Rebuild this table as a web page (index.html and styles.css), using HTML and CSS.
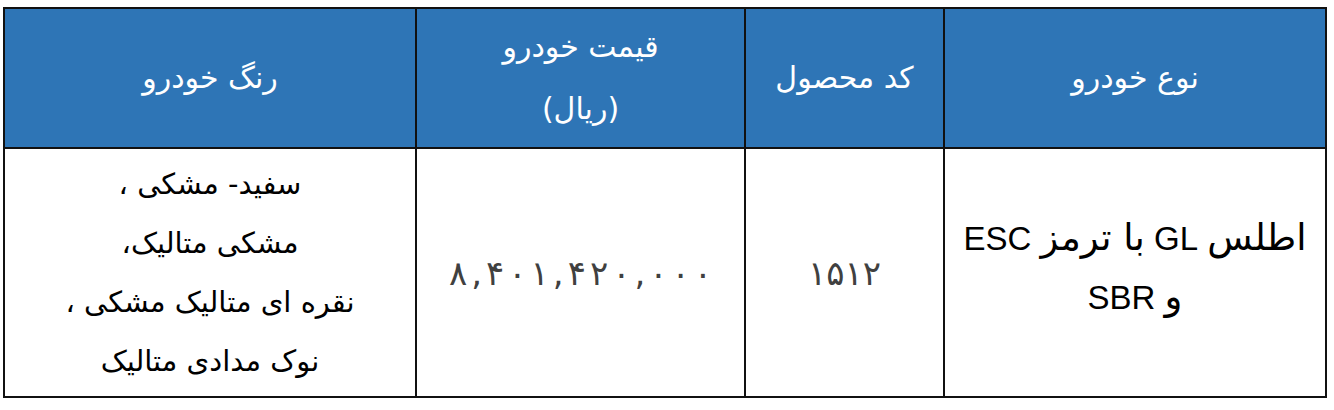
FILE: index.html
```html
<!DOCTYPE html>
<html lang="fa" dir="rtl">
<head>
<meta charset="utf-8">
<title>قیمت خودرو</title>
<link rel="stylesheet" href="styles.css">
</head>
<body>
<div class="page">
  <table class="price-table">
    <colgroup>
      <col class="c-type">
      <col class="c-code">
      <col class="c-price">
      <col class="c-color">
    </colgroup>
    <thead>
      <tr class="head-row">
        <th>نوع خودرو</th>
        <th>کد محصول</th>
        <th>قیمت خودرو<br>(ریال)</th>
        <th>رنگ خودرو</th>
      </tr>
    </thead>
    <tbody>
      <tr class="body-row">
        <td class="type-cell"><span class="fa">اطلس</span> GL <span class="fa">با ترمز</span> ESC<br><span class="fa">و</span> SBR</td>
        <td class="num-cell">۱۵۱۲</td>
        <td class="num-cell"><span class="price"><span>۸</span><span>,</span><span>۴</span><span>۰</span><span>۱</span><span>,</span><span>۴</span><span>۲</span><span>۰</span><span>,</span><span>۰</span><span>۰</span><span>۰</span></span></td>
        <td class="color-cell">سفید- مشکی ،<br>مشکی متالیک،<br>نقره ای متالیک مشکی ،<br>نوک مدادی متالیک</td>
      </tr>
    </tbody>
  </table>
</div>
</body>
</html>
```
FILE: styles.css
```css
html, body {
  margin: 0;
  padding: 0;
  background: #ffffff;
}

.page {
  padding: 7px 7px 0 5px;
}

.price-table {
  width: 1322px;
  table-layout: fixed;
  border-collapse: collapse;
  border: 2px solid #000;
  font-family: "DejaVu Sans", sans-serif;
  direction: rtl;
}

.c-type { width: 382px; }
.c-code { width: 199px; }
.c-price { width: 329px; }
.c-color { width: 412px; }

.price-table th,
.price-table td {
  border: 2px solid #111;
  text-align: center;
  vertical-align: middle;
  padding: 0;
}

.head-row {
  height: 140px;
}

.head-row th {
  background: #2e75b6;
  color: #ffffff;
  font-weight: normal;
  font-size: 30px;
  line-height: 62px;
}

.body-row {
  height: 249px;
}

.type-cell {
  font-family: "Liberation Sans", "DejaVu Sans", sans-serif;
  font-size: 33px;
  line-height: 58px;
  color: #000;
  padding-bottom: 10px !important;
}

.type-cell .fa {
  font-family: "DejaVu Sans", sans-serif;
  font-size: 37px;
}

.num-cell {
  font-size: 34px;
  color: #404040;
}

.price {
  direction: ltr;
  unicode-bidi: isolate;
  display: inline-flex;
}

.price span {
  padding: 0 2px;
}

.color-cell {
  font-size: 29px;
  line-height: 59px;
  color: #000;
}
```
